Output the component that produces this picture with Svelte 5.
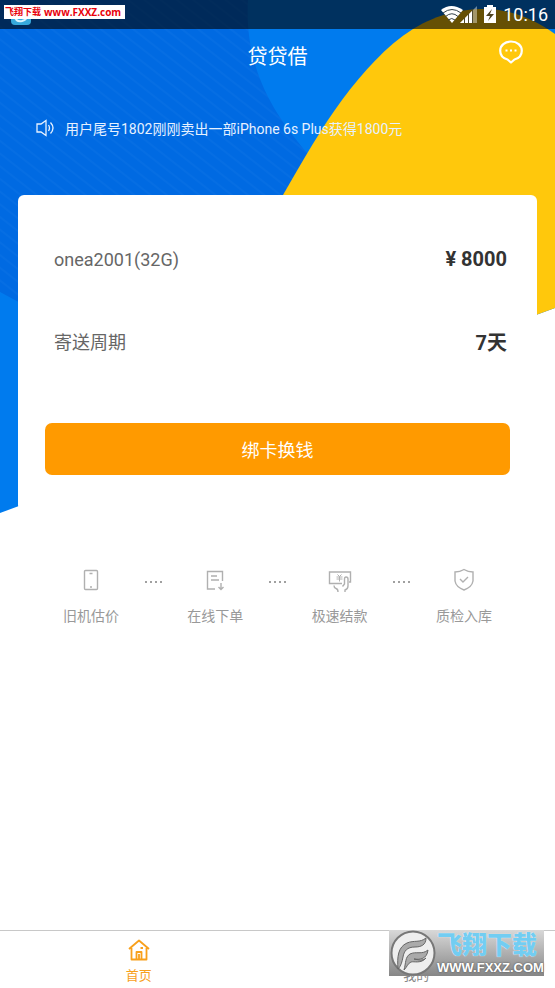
<script lang="ts">
	type Step = { icon: string; label: string };

	const steps: Step[] = [
		{ icon: 'phone', label: '旧机估价' },
		{ icon: 'order', label: '在线下单' },
		{ icon: 'cash', label: '极速结款' },
		{ icon: 'shield', label: '质检入库' }
	];

	const rows = [
		{ name: 'onea2001(32G)', value: '¥ 8000' },
		{ name: '寄送周期', value: '7天' }
	];

	let tab = $state('home');
</script>

<div class="page">
	<svg class="backdrop" viewBox="0 0 555 514" aria-hidden="true">
		<defs>
			<pattern id="stripes" width="10" height="10" patternUnits="userSpaceOnUse" patternTransform="rotate(38)">
				<rect width="10" height="10" fill="#006ae2" />
				<rect width="10" height="2" fill="#066ee3" />
			</pattern>
			<clipPath id="slant"><path d="M0 0H555V308L0 513Z" /></clipPath>
		</defs>
		<g clip-path="url(#slant)">
			<rect width="555" height="514" fill="#007bee" />
			<path d="M0 0H248C245 55 262 102 309 155L330 210L200 400L0 292Z" fill="url(#stripes)" />
			<path d="M283 195C303 160 322 127 342 100C363 72 386 46 413 29C439 13 463 9 484 9C510 9 534 19 555 34V400H240Z" fill="#ffc80c" />
		</g>
	</svg>

	<div class="statusbar">
		<svg class="notif" width="20" height="20" viewBox="0 0 20 20" aria-hidden="true">
			<rect width="20" height="20" rx="4" fill="#36a9dc" />
			<path d="M4 12Q5 17 11 16Q15 15 16 12" fill="none" stroke="#d9f4ff" stroke-width="2" />
		</svg>
		<svg width="58" height="20" viewBox="0 0 58 20" aria-hidden="true">
			<path d="M2 5Q12 -3 24 5L13 18Z" fill="#fff" />
			<path d="M4 8Q13 1 22 8M6.500 11.500Q13 6 19 11.500M9 15Q13 12 16 15" fill="none" stroke="#32404a" stroke-width="1" />
			<path d="M21 18L38 1V18Z" fill="#fff" opacity="0.4" />
			<path d="M21 18L33 6V18Z" fill="#fff" />
			<path d="M25.500 13V18M29.500 9V18M33.500 5V18" stroke="#4f4a30" stroke-width="1" />
			<path d="M45 2H48V0H54V2H57V18H45Z" fill="#fff" />
			<path d="M53 4L47 11H51L49 16L55 9H51Z" fill="#4d4220" />
		</svg>
		<span class="clock">10:16</span>
	</div>
	<div class="tag"><span>飞翔下载</span><span class="tag-url">www.FXXZ.com</span></div>

	<header class="titlebar">
		<h1>贷贷借</h1>
		<button type="button" class="chat" aria-label="消息">
			<svg width="24" height="24" viewBox="0 0 24 24" aria-hidden="true">
				<path d="M12 1.500C5.900 1.500 1.200 5.300 1.200 10.800C1.200 15.500 4.500 18.500 8.500 19.500L12 22.500L15.500 19.500C19.500 18.500 22.800 15.500 22.800 10.800C22.800 5.300 18.100 1.500 12 1.500Z" fill="none" stroke="#fff" stroke-width="2.200" stroke-linejoin="round" />
				<path d="M6.500 10.500H8.500M11 10.500H13M15.500 10.500H17.500" stroke="#fff" stroke-width="2" />
			</svg>
		</button>
	</header>

	<p class="notice">
		<svg width="19" height="18" viewBox="0 0 19 18" aria-hidden="true">
			<path d="M1 5H5L10 1.500V16.500L5 13H1Z" fill="none" stroke="#e6f1ff" stroke-width="1.300" />
			<path d="M12.500 6Q14.500 9 12.500 12M14.500 3.500Q19.500 9 14.500 14.500" fill="none" stroke="#e6f1ff" stroke-width="1.300" />
		</svg>
		<span>用户尾号1802刚刚卖出一部iPhone 6s Plus获得1800元</span>
	</p>

	<main>
		<section class="card">
			<dl>
				{#each rows as r (r.name)}
					<div class="row">
						<dt>{r.name}</dt>
						<dd>{r.value}</dd>
					</div>
				{/each}
			</dl>
			<button type="button" class="submit">绑卡换钱</button>
		</section>

		<ol class="steps">
			{#each steps as s, i (s.icon)}
				{#if i > 0}
					<li class="dots" aria-hidden="true"><i></i><i></i><i></i><i></i></li>
				{/if}
				<li class="step">
					<svg width="24" height="24" viewBox="0 0 24 24" aria-hidden="true">
						{#if s.icon === 'phone'}
							<rect x="5.500" y="2.500" width="13" height="19" rx="1" />
							<path d="M10.500 5.500H13.500M11 19H13" />
						{:else if s.icon === 'order'}
							<path d="M12 21H4.500V3.500H19.500V13M8 8H14M8 12H16M18 15V22M15.500 19L18 21.500L20.500 19" />
						{:else if s.icon === 'cash'}
							<path d="M14 15.500H1.500V4H22.500V14H21" />
							<path d="M9.500 6.500L11.500 8.500L13.500 6.500M8.500 9H14.500M8.500 11H14.500M11.500 8.500V13.500" stroke-width="1" />
							<path d="M6 17.500Q6 20 8 20.500Q10 21 10 24M17 24V22Q20 21 20 18V11Q20 9 18 9Q16.500 9 16.500 11V16L14.500 18.500" />
						{:else}
							<path d="M12 1.500Q16 4 21 4V13Q20 19 12 22Q4 19 3 13V4Q8 4 12 1.500Z" />
							<path d="M8 11L11 14L16 9" />
						{/if}
					</svg>
					<span>{s.label}</span>
				</li>
			{/each}
		</ol>
	</main>

	<nav>
		<button type="button" class:active={tab === 'home'} onclick={() => (tab = 'home')}>
			<svg width="22" height="22" viewBox="0 0 22 22" aria-hidden="true">
				<path d="M1 10L11 1.500L21 10M3.500 9V20.500H18.500V9M8.500 20V13H13.500V20M11 15V20M12.500 9H15" />
			</svg>
			<span>首页</span>
		</button>
		<button type="button" class:active={tab === 'mine'} onclick={() => (tab = 'mine')}>
			<svg width="22" height="22" viewBox="0 0 22 22" aria-hidden="true">
				<circle cx="11" cy="7" r="4" />
				<path d="M3 20Q4 13 11 13Q18 13 19 20Z" />
			</svg>
			<span>我的</span>
		</button>
	</nav>

	<div class="mark">
		<svg width="48" height="46" viewBox="0 0 48 46" aria-hidden="true">
			<circle cx="24" cy="23" r="21.500" fill="#eee" stroke="#777" stroke-width="2" />
			<path d="M9 39C8 27 9 17 18 13C25 10 31 13 37 8C37 15 32 17 26 17C18 17 15 21 14 27C13 32 12 36 9 39Z" fill="#aaa" stroke="#666" />
			<path d="M15 40C17 33 16 27 21 24C27 21 33 25 39 20C38 29 31 30 25 29C31 30 33 31 37 28C32 34 25 31 22 32C19 33 18 37 15 40Z" fill="#aaa" stroke="#666" />
		</svg>
		<div class="mark-text">
			<span class="mark-cn">飞翔下载</span>
			<span class="mark-url">WWW.FXXZ.COM</span>
		</div>
	</div>
</div>

<style>
	:global(body) {
		margin: 0;
		background: #fff;
	}
	.page {
		position: relative;
		display: flex;
		flex-direction: column;
		min-height: 100vh;
		overflow: hidden;
		font-family: Roboto, 'Noto Sans CJK SC', sans-serif;
		color: #666;
	}
	button {
		padding: 0;
		border: 0;
		background: none;
		font: inherit;
		cursor: pointer;
	}
	.backdrop {
		position: absolute;
		top: 0;
		left: 0;
		width: 100%;
	}
	.statusbar,
	.titlebar,
	.notice,
	main {
		position: relative;
	}
	.statusbar {
		display: flex;
		align-items: center;
		height: 29px;
		padding: 0 7px 0 11px;
		gap: 6px;
		background: rgba(0, 0, 0, 0.6);
		color: #fff;
	}
	.notif {
		margin-right: auto;
	}
	.clock {
		font-size: 18px;
	}
	.tag {
		position: absolute;
		top: 5px;
		left: 4px;
		display: flex;
		gap: 3px;
		padding: 0 4px 0 1px;
		background: #fff;
		color: #e8000b;
		font: bold 9px/14px 'Noto Sans CJK SC', sans-serif;
		white-space: nowrap;
	}
	.tag-url {
		font-family: 'Open Sans', sans-serif;
		font-size: 10px;
	}
	.titlebar {
		display: flex;
		align-items: center;
		justify-content: center;
		height: 52px;
	}
	h1 {
		margin: 0;
		color: #fff;
		font-size: 20px;
		font-weight: 400;
	}
	.chat {
		position: absolute;
		top: 11px;
		right: 32px;
		height: 24px;
	}
	.notice {
		display: flex;
		align-items: center;
		gap: 10px;
		height: 94px;
		margin: 0 36px 20px;
		color: #e6f1ff;
		font-size: 14px;
	}
	main {
		flex: 1;
	}
	.card {
		margin: 0 18px;
		padding: 23px 27px 36px;
		border-radius: 6px;
		background: #fff;
	}
	dl {
		margin: 0 3px 41px 9px;
	}
	.row {
		display: flex;
		align-items: center;
		justify-content: space-between;
		height: 82px;
		font-size: 18px;
	}
	dd {
		margin: 0;
		color: #333;
		font-size: 20px;
		font-weight: 700;
	}
	.submit {
		display: block;
		width: 100%;
		height: 52px;
		border-radius: 7px;
		background: #ff9a00;
		color: #fff;
		font-size: 18px;
	}
	.steps {
		display: grid;
		grid-template-columns: repeat(7, 1fr);
		margin: 0;
		padding: 57px 60px;
		list-style: none;
	}
	.step {
		display: flex;
		flex-direction: column;
		align-items: center;
		gap: 14px;
		color: #999;
		font-size: 14px;
		line-height: 20px;
		white-space: nowrap;
	}
	.step svg {
		fill: none;
		stroke: #b0b0b0;
		stroke-width: 1.4;
	}
	.dots {
		display: flex;
		align-items: center;
		justify-content: center;
		gap: 3px;
		height: 28px;
	}
	.dots i {
		width: 2px;
		height: 2px;
		background: #a0a0a0;
	}
	nav {
		display: flex;
		height: 57px;
		border-top: 1px solid #c8c8c8;
	}
	nav button {
		display: flex;
		flex: 1;
		flex-direction: column;
		align-items: center;
		gap: 6px;
		padding-top: 8px;
		color: #888;
		font-size: 13px;
		line-height: 18px;
	}
	nav svg {
		fill: none;
		stroke: currentColor;
		stroke-width: 1.8;
		stroke-linejoin: round;
	}
	nav .active {
		color: #f8a01c;
	}
	.mark {
		position: absolute;
		right: 11px;
		bottom: 12px;
		display: flex;
		height: 46px;
		background: linear-gradient(#d8d8d8, #868686);
	}
	.mark-text {
		display: flex;
		flex-direction: column;
		width: 107px;
		white-space: nowrap;
	}
	.mark-cn {
		color: #72cdf2;
		font: 900 25px/30px 'Liberation Sans', 'Noto Sans CJK SC', sans-serif;
		text-shadow: 0 0 1px #fff;
	}
	.mark-url {
		color: #fff;
		font: bold 13px/16px 'Liberation Sans', sans-serif;
		text-shadow: 0 0 2px #444;
	}
</style>
